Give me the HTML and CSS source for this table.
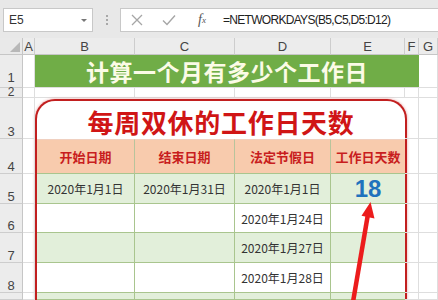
FILE: index.html
```html
<!DOCTYPE html>
<html lang="zh">
<head>
<meta charset="utf-8">
<title>NETWORKDAYS</title>
<link rel="stylesheet" href="styles.css">
</head>
<body>
<div class="toolbar">
  <div class="namebox"><span class="ref">E5</span><span class="drop"></span></div>
  <div class="dots"><i></i><i></i><i></i></div>
  <div class="formulabox">
    <span class="ic cancel">
      <svg width="12" height="12" viewBox="0 0 12 12"><path d="M1 1L11 11M11 1L1 11" stroke="#a6a6a6" stroke-width="1.3" fill="none"/></svg>
    </span>
    <span class="ic enter">
      <svg width="14" height="12" viewBox="0 0 14 12"><path d="M1 6.5L5 10.5L13 1.5" stroke="#a6a6a6" stroke-width="1.4" fill="none"/></svg>
    </span>
    <span class="ic fx"><i>f</i><sub>x</sub></span>
    <span class="formula">=NETWORKDAYS(B5,C5,D5:D12)</span>
  </div>
</div>

<div class="sheet">
  <!-- column headers -->
  <div class="corner"><span class="tri"></span></div>
  <div class="ch">A</div>
  <div class="ch">B</div>
  <div class="ch">C</div>
  <div class="ch">D</div>
  <div class="ch">E</div>
  <div class="ch">F</div>
  <div class="ch">G</div>

  <!-- row 1 -->
  <div class="rh r1">1</div>
  <div class="c"></div>
  <div class="banner">计算一个月有多少个工作日</div>
  <div class="c"></div>

  <!-- row 2 -->
  <div class="rh r2">2</div>
  <div class="c"></div><div class="c"></div><div class="c"></div><div class="c"></div><div class="c"></div><div class="c"></div><div class="c"></div>

  <!-- frame (rows 3+) -->
  <div class="frame">
    <div class="title">每周双休的工作日天数</div>
    <div class="th">开始日期</div>
    <div class="th">结束日期</div>
    <div class="th">法定节假日</div>
    <div class="th last">工作日天数</div>

    <div class="td g">2020年1月1日</div>
    <div class="td g">2020年1月31日</div>
    <div class="td g">2020年1月1日</div>
    <div class="td g last num">18</div>

    <div class="td"></div>
    <div class="td"></div>
    <div class="td">2020年1月24日</div>
    <div class="td last"></div>

    <div class="td g"></div>
    <div class="td g"></div>
    <div class="td g">2020年1月27日</div>
    <div class="td g last"></div>

    <div class="td"></div>
    <div class="td"></div>
    <div class="td">2020年1月28日</div>
    <div class="td last"></div>

    <div class="td g"></div>
    <div class="td g"></div>
    <div class="td g"></div>
    <div class="td g last"></div>
  </div>

  <div class="rh">3</div><div class="c"></div><div class="c"></div><div class="c"></div>
  <div class="rh">4</div><div class="c"></div><div class="c"></div><div class="c"></div>
  <div class="rh">5</div><div class="c"></div><div class="c"></div><div class="c"></div>
  <div class="rh">6</div><div class="c"></div><div class="c"></div><div class="c"></div>
  <div class="rh">7</div><div class="c"></div><div class="c"></div><div class="c"></div>
  <div class="rh">8</div><div class="c"></div><div class="c"></div><div class="c"></div>
  <div class="rh"></div><div class="c"></div><div class="c"></div><div class="c"></div>

  <svg class="arrow" width="60" height="110" viewBox="340 195 60 110">
    <path d="M353 302L368 214" stroke="#ec1c1c" stroke-width="4.5" fill="none"/>
    <path d="M370.5 202L374.5 218.5L361.5 215.8Z" fill="#ec1c1c"/>
  </svg>
</div>
</body>
</html>
```

FILE: styles.css
```css
* { box-sizing: border-box; }
html, body { margin: 0; padding: 0; }
body {
  width: 438px;
  height: 300px;
  overflow: hidden;
  background: #ffffff;
  font-family: "Liberation Sans", Arial, sans-serif;
}

/* ---------- formula toolbar ---------- */
.toolbar {
  height: 38px;
  background: #e8e8e8;
  display: flex;
  align-items: flex-start;
  padding: 8px 0 0 3px;
}
.namebox {
  width: 90px;
  height: 24px;
  background: #fff;
  border: 1px solid #c8c8c8;
  display: flex;
  align-items: center;
  justify-content: space-between;
  padding: 0 5px 0 5px;
  font-size: 12px;
  color: #333;
}
.drop {
  width: 0; height: 0;
  border-left: 3px solid transparent;
  border-right: 3px solid transparent;
  border-top: 3px solid #777;
}
.dots {
  width: 27px;
  height: 24px;
  display: flex;
  flex-direction: column;
  align-items: center;
  justify-content: center;
  gap: 2px;
}
.dots i {
  width: 2px; height: 2px;
  background: #a8a8a8;
  display: block;
}
.formulabox {
  flex: 1;
  height: 24px;
  background: #fff;
  border: 1px solid #c8c8c8;
  border-right: none;
  display: flex;
  align-items: center;
  padding-left: 9px;
}
.ic {
  display: flex;
  align-items: center;
  justify-content: center;
  height: 22px;
}
.cancel { width: 14px; margin-right: 17px; }
.enter { width: 16px; margin-right: 17px; }
.fx {
  width: 16px;
  font-family: "Liberation Serif", serif;
  font-size: 14px;
  color: #555;
}
.fx sub { font-size: 9px; font-style: italic; vertical-align: -2px; }
.formula {
  margin-left: 13px;
  font-size: 12px;
  letter-spacing: -0.7px;
  color: #222;
  white-space: nowrap;
}

/* ---------- sheet grid ---------- */
.sheet {
  position: relative;
  display: grid;
  grid-template-columns: 23px 12px 100px 100px 96px 74px 14px 1fr;
  grid-template-rows: 17px 33px 10px 41px 35px 30px 29px 30px 30px 7px;
}
.corner {
  background: #e9e9e9;
  border-right: 1px solid #c6c6c6;
  border-bottom: 1px solid #c6c6c6;
  position: relative;
}
.tri {
  position: absolute;
  right: 2px;
  bottom: 2px;
  width: 0; height: 0;
  border-left: 10px solid transparent;
  border-bottom: 10px solid #b8b8b8;
}
.ch {
  background: #ececec;
  border-right: 1px solid #cdcdcd;
  border-bottom: 1px solid #c6c6c6;
  font-size: 13px;
  color: #444;
  display: flex;
  align-items: center;
  justify-content: center;
  line-height: 1;
}
.rh {
  background: #ececec;
  border-right: 1px solid #c6c6c6;
  border-bottom: 1px solid #cdcdcd;
  font-size: 13px;
  color: #444;
  display: flex;
  align-items: flex-end;
  justify-content: center;
  padding-bottom: 0;
  line-height: 13px;
}
.rh.r1 { padding-bottom: 3px; }
.rh.r2 { align-items: center; line-height: 9px; font-size: 12px; }
.c {
  border-right: 1px solid #dedede;
  border-bottom: 1px solid #dedede;
}
.banner {
  grid-column: span 5;
  background: #70ad47;
  color: #fbfbe6;
  font-family: "Noto Sans CJK SC", sans-serif;
  font-weight: 700;
  font-size: 23px;
  display: flex;
  align-items: center;
  justify-content: center;
  letter-spacing: 0.5px;
  border-bottom: 1px solid #dedede;
}

/* ---------- framed table ---------- */
.frame {
  grid-column: 3 / 7;
  grid-row: 4 / 11;
  margin-right: -2px;
  margin-top: 1px;
  background: #fff;
  border: 2px solid #c21f1f;
  border-bottom: none;
  border-radius: 20px 20px 0 0;
  box-shadow: 0 0 3px rgba(200, 40, 40, 0.45);
  display: grid;
  grid-template-columns: 98px 100px 96px 74px;
  grid-template-rows: 38px 35px 30px 29px 30px 30px 7px;
  overflow: hidden;
  font-family: "Noto Sans CJK SC", sans-serif;
}
.title {
  grid-column: 1 / -1;
  display: flex;
  align-items: center;
  justify-content: center;
  color: #d01515;
  font-weight: 700;
  font-size: 26px;
  letter-spacing: 0.7px;
  padding-top: 2px;
}
.th {
  background: #f8cbad;
  color: #c81e1e;
  font-size: 13px;
  font-weight: 700;
  display: flex;
  align-items: center;
  justify-content: center;
  border-right: 1px solid #b8c49c;
  border-bottom: 1px solid #a9c58e;
  border-top: 1px solid #f0d0c0;
}
.td {
  display: flex;
  align-items: center;
  justify-content: center;
  font-size: 12px;
  color: #333;
  border-right: 1px solid #a9c58e;
  border-bottom: 1px solid #a9c58e;
}
.td.g { background: #e2efda; }
.last { border-right: none; }
.num {
  font-family: "Liberation Sans", Arial, sans-serif;
  font-weight: 700;
  font-size: 24px;
  color: #1f72bd;
}

.arrow {
  position: absolute;
  left: 340px;
  top: 157px;
  pointer-events: none;
}
```
